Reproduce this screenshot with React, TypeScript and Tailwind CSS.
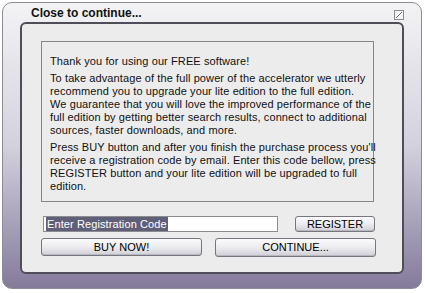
export default function App() {
  const font = { fontFamily: '"Liberation Sans", Arial, sans-serif' }

  const lines1 = ["Thank you for using our FREE software!"]
  const lines2 = [
    "To take advantage of the full power of the accelerator we utterly",
    "recommend you to upgrade your lite edition to the full edition.",
    "We guarantee that you will love the improved performance of the",
    "full edition by getting better search results, connect to additional",
    "sources, faster downloads, and more.",
  ]
  const lines3 = [
    "Press BUY button and after you finish the purchase process you'll",
    "receive a registration code by email. Enter this code bellow, press",
    "REGISTER button and your lite edition will be upgraded to full",
    "edition.",
  ]

  const btn =
    "flex items-center justify-center rounded-[3px] border border-[#76767e] bg-gradient-to-b from-[#fbfbfc] via-[#ececf0] to-[#cfcfd6] text-[11px] text-black shadow-[inset_0_-1px_0_#b8b8c0]"

  return (
    <div className="w-[425px] h-[293px] bg-white pt-[2px] pl-[2px]" style={font}>
      <div className="w-[420px] h-[287px] rounded-[10px] border border-[#8e8b98] bg-gradient-to-b from-[#f3f3f5] via-[#d4d1de] to-[#847b9b] flex flex-col px-[17px] pb-[14px]">
        {/* Title bar */}
        <div className="h-[19px] flex items-center justify-between pl-[11px]">
          <span className="text-[12px] font-bold text-[#111] leading-none mt-[1px]">Close to continue...</span>
          <svg width="10" height="10" viewBox="0 0 10 10" className="mt-[4px]">
            <rect x="0.5" y="0.5" width="9" height="9" fill="#f4f4f6" stroke="#8a8a92" />
            <line x1="2" y1="8" x2="8" y2="2" stroke="#6a6a72" strokeWidth="1" />
          </svg>
        </div>

        {/* Inner panel */}
        <div className="flex-1 rounded-[6px] border-2 border-[#4e4d58] bg-[#ececec] pl-[19px] pt-[17px]">
          <div className="w-[333px] h-[161px] border border-[#86868a] bg-[#ececec] pl-[8px] pt-[13px] text-[11px] leading-[13px] tracking-[0.1px] text-[#111]">
            {lines1.map((l) => (
              <div key={l} className="whitespace-nowrap">{l}</div>
            ))}
            <div className="mt-[4px]">
              {lines2.map((l) => (
                <div key={l} className="whitespace-nowrap">{l}</div>
              ))}
            </div>
            <div className="mt-[4px]">
              {lines3.map((l) => (
                <div key={l} className="whitespace-nowrap">{l}</div>
              ))}
            </div>
          </div>

          <div className="flex mt-[14px]">
            <div className="ml-[2px] w-[235px] h-[16px] border border-[#8c8c90] bg-white flex items-center pl-[2px]">
              <span className="bg-[#5f5f78] text-white text-[11px] leading-[14px] px-[1px] tracking-[0.1px]">Enter Registration Code</span>
            </div>
            <div className={`${btn} ml-[17px] w-[80px] h-[16px]`}>REGISTER</div>
          </div>

          <div className="flex mt-[6px]">
            <div className={`${btn} w-[161px] h-[18px]`}>BUY NOW!</div>
            <div className={`${btn} ml-[13px] w-[161px] h-[19px]`}>CONTINUE...</div>
          </div>
        </div>
      </div>
    </div>
  )
}
